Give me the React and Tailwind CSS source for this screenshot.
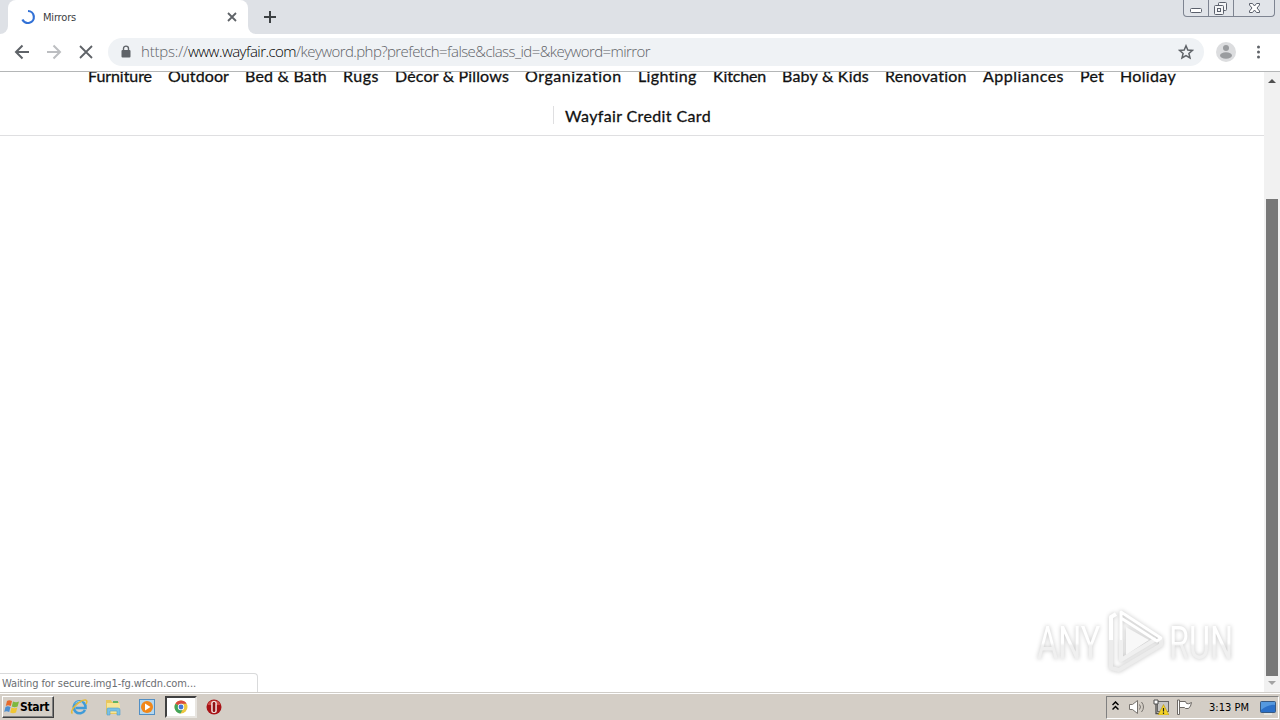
import React, { useLayoutEffect, useRef, useState } from 'react';

const categories = [
  { label: 'Furniture', width: 64 },
  { label: 'Outdoor', width: 61 },
  { label: 'Bed & Bath', width: 82 },
  { label: 'Rugs', width: 36 },
  { label: 'Décor & Pillows', width: 114 },
  { label: 'Organization', width: 97 },
  { label: 'Lighting', width: 59 },
  { label: 'Kitchen', width: 53 },
  { label: 'Baby & Kids', width: 87 },
  { label: 'Renovation', width: 82 },
  { label: 'Appliances', width: 81 },
  { label: 'Pet', width: 24 },
  { label: 'Holiday', width: 56 },
];

// Spaces the letters so that the label takes up exactly the given width
const FitText = ({ width, className = '', children }) => {
  const ref = useRef(null);
  const [spacing, setSpacing] = useState(0);

  useLayoutEffect(() => {
    const el = ref.current;
    const natural = el.getBoundingClientRect().width;
    setSpacing((width - natural) / el.textContent.length);
  }, [width]);

  return (
    <span ref={ref} className={`inline-block whitespace-nowrap ${className}`} style={{ letterSpacing: `${spacing}px` }}>
      {children}
    </span>
  );
};

const TabStrip = () => (
  <div className="flex h-[34px] bg-[#dee1e6]">
    <div className="w-2 bg-white"><div className="h-full rounded-br-lg bg-[#dee1e6]" /></div>
    <div className="flex h-full w-60 items-center rounded-t-lg bg-white pr-[10px] pl-3">
      <svg className="h-4 w-4" viewBox="0 0 16 16" fill="none" stroke="#3271d6" strokeWidth="2.200">
        <path d="M8 2a6 6 0 1 1-5.600 8.500" />
      </svg>
      <FitText width={33} className="mt-0.5 ml-[7px] text-[11px] text-[#3c4043]">Mirrors</FitText>
      <svg className="ml-auto h-3 w-3" viewBox="0 0 12 12" stroke="#5f6368" strokeWidth="1.8">
        <path d="M2 2l8 8M10 2l-8 8" />
      </svg>
    </div>
    <div className="w-2 bg-white"><div className="h-full rounded-bl-lg bg-[#dee1e6]" /></div>
    <svg className="mt-[10px] ml-[7px] h-[14px] w-[14px]" viewBox="0 0 14 14" stroke="#3c4043" strokeWidth="2">
      <path d="M7 1v12M1 7h12" />
    </svg>
    <div className="mr-[5px] ml-auto flex h-[17px] w-[92px] rounded-b border border-t-0 border-[#7e8491] bg-[#e1e4e9]">
      <div className="w-[25px] border-r border-[#7e8491] pl-[6px]">
        <svg className="h-4 w-4" viewBox="0 0 16 16" fill="#fff" stroke="#5b606c">
          <rect x=".5" y="8.5" width="11" height="4" rx="1" />
        </svg>
      </div>
      <div className="w-[25px] border-r border-[#7e8491] pl-[5px]">
        <svg className="h-4 w-4" viewBox="0 0 16 16" fill="#f4f5f7" stroke="#5b606c">
          <rect x="4.5" y="2.5" width="8" height="8" rx="1" />
          <rect x=".5" y="5.5" width="9" height="9" rx="1" />
          <rect x="3.5" y="8.5" width="3" height="3" />
        </svg>
      </div>
      <svg className="ml-[14px] h-4 w-4" viewBox="0 0 16 16" fill="#fff" stroke="#5b606c">
        <path d="M1.500 3.500h3l2 2.500 2-2.500h3V5L9 8l2.500 3v1.500h-3l-2-2.500-2 2.500h-3V11L4 8 1.500 5z" />
      </svg>
    </div>
  </div>
);

const Toolbar = () => (
  <div className="flex h-[38px] items-center border-b border-[#b4b6b7] bg-white pb-px">
    <svg className="ml-[14px] h-4 w-4" viewBox="0 0 16 16" fill="none" stroke="#5f6368" strokeWidth="2">
      <path d="M15 8H2.500M8.500 1.500L2 8l6.500 6.500" />
    </svg>
    <svg className="ml-4 h-4 w-4" viewBox="0 0 16 16" fill="none" stroke="#bcbec1" strokeWidth="2">
      <path d="M1 8h12.500M7.500 1.500L14 8l-6.500 6.500" />
    </svg>
    <svg className="ml-4 h-4 w-4" viewBox="0 0 16 16" stroke="#5f6368" strokeWidth="1.8">
      <path d="M2 2l12 12M14 2L2 14" />
    </svg>
    <div className="ml-[14px] flex h-7 w-[1096px] items-center rounded-full bg-[#eff2f5] pr-[10px] pl-[13px]">
      <svg className="h-[14px] w-[10px]" viewBox="0 0 10 14">
        <path d="M2.500 5V3.600a2.500 2.500 0 0 1 5 0V5" fill="none" stroke="#5f6368" strokeWidth="1.4" />
        <rect x=".5" y="5" width="9" height="7.500" rx="1" fill="#5f6368" />
      </svg>
      <div className="mb-0.5 ml-[10px] flex font-['Open_Sans','Noto_Sans',sans-serif] text-[15px] leading-5 font-light">
        <FitText width={47} className="text-[#5f6368]">https://</FitText>
        <FitText width={108} className="text-black">www.wayfair.com</FitText>
        <FitText width={354} className="text-[#5f6368]">/keyword.php?prefetch=false&amp;class_id=&amp;keyword=mirror</FitText>
      </div>
      <svg className="ml-auto h-4 w-4" viewBox="0 0 16 16" fill="none" stroke="#5f6368" strokeWidth="1.5">
        <path d="M8 1.800l1.800 4.200 4.600.4-3.500 3 1.100 4.500L8 11.500l-4 2.400 1.100-4.500-3.500-3 4.600-.4z" />
      </svg>
    </div>
    <svg className="ml-3 h-5 w-5" viewBox="0 0 20 20" fill="#9a9c9f">
      <circle cx="10" cy="10" r="10" fill="#dcdddf" />
      <circle cx="10" cy="6" r="3" />
      <ellipse cx="10" cy="13.500" rx="6" ry="3.200" />
    </svg>
    <svg className="ml-5 h-4 w-1" viewBox="0 0 4 16" fill="#5f6368">
      <circle cx="2.500" cy="3" r="1.500" />
      <circle cx="2.500" cy="8" r="1.500" />
      <circle cx="2.500" cy="13" r="1.500" />
    </svg>
  </div>
);

const Watermark = () => (
  <div className="absolute right-[42px] bottom-4 flex h-[70px] w-[204px] items-center justify-between px-[3px] font-['Roboto',sans-serif] text-[47px] leading-[56px] text-transparent drop-shadow-[0_0_2px_#c4c4c4]">
    <div className="mt-1 w-[64px]">
      <span className="inline-block origin-left scale-x-[0.69] bg-linear-to-b from-white from-50% to-[#f0f0f0] to-55% bg-clip-text">ANY</span>
    </div>
    <svg className="h-[64px] w-[58px]" viewBox="0 0 58 64" fill="none" stroke="#fff" strokeWidth="4" strokeLinejoin="round">
      <path d="M5 31v28l8 2 42-25v-6" stroke="#ececec" />
      <path d="M15 31v20L50 30" stroke="#f0f0f0" />
      <path d="M5 31V8l5-3" />
      <path d="M15 31V3l40 26-4 3-36-23" strokeWidth="3" />
      <path d="M20 18v28l23-15z" fill="#f8f8f8" stroke="none" />
    </svg>
    <div className="mt-1 w-[66px]">
      <span className="inline-block origin-left scale-x-[0.69] bg-linear-to-b from-white from-50% to-[#f0f0f0] to-55% bg-clip-text">RUN</span>
    </div>
  </div>
);

const Page = () => (
  <div className="relative flex h-[620px] overflow-hidden bg-white">
    <div className="h-full flex-1 overflow-hidden">
      <nav className="-mt-4 h-20 border-b border-[#dfdfe1] font-['Lato',sans-serif] text-base leading-6 text-[#111] [-webkit-text-stroke:0.3px_#111]">
        <div className="flex h-10 items-center gap-4 pl-[88px]">
          {categories.map(({ label, width }) => (
            <div key={label} className="flex-none" style={{ width }}>
              <FitText width={width}>{label}</FitText>
            </div>
          ))}
        </div>
        <div className="flex h-10 items-center pb-0.5 pl-[553px]">
          <div className="h-[18px] border-l border-[#dfdfe1]" />
          <FitText width={146} className="mt-0.5 ml-[11px]">Wayfair Credit Card</FitText>
        </div>
      </nav>
    </div>
    <div className="flex h-full w-4 flex-col items-center bg-[#f1f1f1]">
      <svg className="h-4 w-4" viewBox="0 0 16 16" fill="#505050"><path d="M4 11l4-4 4 4z" /></svg>
      <div className="mt-[111px] h-[477px] w-3 bg-[#787878]" />
      <svg className="h-4 w-4" viewBox="0 0 16 16" fill="#a3a3a3"><path d="M4 5l4 4 4-4z" /></svg>
    </div>
    <Watermark />
    <div className="absolute bottom-0 left-0 h-[19px] w-[258px] rounded-tr border border-b-0 border-l-0 border-[#d9dadb] bg-white pl-[2px] text-[11px] leading-[20px] text-[#6b6e72]">
      <FitText width={194}>Waiting for secure.img1-fg.wfcdn.com...</FitText>
    </div>
  </div>
);

const ExplorerIcon = () => (
  <svg className="h-[18px] w-[18px]" viewBox="0 0 18 18" fill="none">
    <path d="M15 12a6 6 0 1 1 .4-4.500L15.500 10H5.500" stroke="#3f9bd8" strokeWidth="2.600" />
    <path d="M5 5.500c2-2.500 6-2.700 7.500 0" stroke="#9bd5f3" />
    <path d="M2.500 15.500c-4-2 7-14 13-13.500 2 .3 1.500 2.500.5 4" stroke="#e5ba38" strokeWidth="1.500" />
  </svg>
);

const FolderIcon = () => (
  <svg className="h-[18px] w-[18px]" viewBox="0 0 18 18">
    <path d="M2 2h5l1 2h7v12H2z" fill="#e9c75e" />
    <path d="M3 5h12l1 2v8H3z" fill="#f7e596" />
    <path d="M9 3h5v2H9z" fill="#63b463" />
    <path d="M3 17v-6q0-1 1-1h10q2 0 2 2v5h-3v-4H6v4z" fill="#79c1e5" stroke="#529fc9" strokeWidth=".6" />
  </svg>
);

const PlayerIcon = () => (
  <svg className="h-4 w-4" viewBox="0 0 16 16">
    <rect x=".5" y=".5" width="15" height="15" fill="#b4d7ef" stroke="#528fc4" />
    <circle cx="8" cy="8" r="6" fill="#f18719" />
    <path d="M6 4.500l5.500 3.500L6 11.500z" fill="#fff" />
  </svg>
);

const ChromeIcon = () => (
  <svg className="h-[14px] w-[14px]" viewBox="0 0 14 14">
    <circle cx="7" cy="7" r="6.500" fill="#edc740" />
    <path d="M7 7L1.400 3.700A6.500 6.500 0 0 1 12.600 3.700H7z" fill="#d94b3f" />
    <path d="M1.400 3.700A6.500 6.500 0 0 0 6.500 13.500L9 9 7 7z" fill="#42a45b" />
    <circle cx="7" cy="7" r="3.200" fill="#fff" />
    <circle cx="7" cy="7" r="2.400" fill="#4477d5" />
  </svg>
);

const OperaIcon = () => (
  <svg className="h-4 w-4" viewBox="0 0 16 16">
    <circle cx="8" cy="8" r="7.500" fill="#a81317" />
    <path d="M1.500 6a7 7 0 0 1 13 0z" fill="#cf4b45" />
    <rect x="5.200" y="2" width="5.600" height="12" rx="2.500" fill="#f2e6e4" />
    <rect x="6.700" y="3" width="2.600" height="10" rx="1.200" fill="#8f1114" />
  </svg>
);

const WindowsIcon = () => (
  <svg className="h-4 w-4" viewBox="0 0 16 16">
    <path d="M3 2q2-1.500 5 0L6.800 7q-3-1.500-5 0z" fill="#e66a2b" />
    <path d="M9 2.500q3 1.500 6 0L13.600 7.500q-3 1.500-5.800 0z" fill="#7db83f" />
    <path d="M1.500 8q2-1.500 5 0L5.200 13q-3-1.500-5 0z" fill="#4c8ed0" />
    <path d="M7.500 8.500q3 1.500 5.800 0L12 13.500q-3 1.500-5.800 0z" fill="#f0c634" />
  </svg>
);

const Taskbar = () => (
  <footer className="flex h-7 items-start border-t border-[#d0cdc8] bg-[#d4cec6] shadow-[inset_0_1px_0_#ffffff]">
    <button className="mt-[3px] ml-[2px] flex h-[22px] w-[52px] items-center border border-t-white border-r-[#404040] border-b-[#404040] border-l-white pl-px text-[12px] font-bold text-black shadow-[inset_-1px_-1px_0_#808080]">
      <WindowsIcon />
      <FitText width={29}>Start</FitText>
    </button>
    <div className="mt-[5px] ml-4"><ExplorerIcon /></div>
    <div className="mt-[5px] ml-4"><FolderIcon /></div>
    <div className="mt-[6px] ml-[17px]"><PlayerIcon /></div>
    <div className="mt-[3px] ml-[10px] flex h-[22px] w-8 items-center justify-center border-2 border-t-[#404040] border-r-[#e8e5e0] border-b-[#e8e5e0] border-l-[#404040] bg-white">
      <ChromeIcon />
    </div>
    <div className="mt-[6px] ml-[9px]"><OperaIcon /></div>
    <div className="mt-[3px] mr-px ml-auto flex h-[23px] w-[173px] items-center border border-t-[#808080] border-r-white border-b-white border-l-[#808080] pl-[5px]">
      <svg className="mb-[3px] h-[10px] w-[7px]" viewBox="0 0 7 10" fill="none" stroke="#000" strokeWidth="1.500">
        <path d="M.5 4l3-3 3 3M.5 8.500l3-3 3 3" />
      </svg>
      <svg className="mb-0.5 ml-[10px] h-4 w-[17px]" viewBox="0 0 17 16" fill="#fff" stroke="#77736e">
        <path d="M.5 5.500h3l5-4v13l-5-4h-3z" />
        <path d="M10.500 5.500q2 2.500 0 5M12.500 3q4 5 0 10" fill="none" />
      </svg>
      <svg className="mb-0.5 ml-[7px] h-4 w-4" viewBox="0 0 16 16">
        <rect x="4.500" y="2.500" width="11" height="10" fill="#c6c6c4" stroke="#666" />
        <path d="M1 1h4v4H1z" fill="#fff" stroke="#4f4f4f" />
        <path d="M3 5v9.500h7" fill="none" stroke="#4f4f4f" strokeWidth="1.300" />
        <path d="M10.500 5.500L16 16H5z" fill="#f4d326" stroke="#a98b10" strokeWidth=".5" />
        <path d="M10.500 9v3.500M10.500 13.500V15" stroke="#222" strokeWidth="1.200" />
      </svg>
      <svg className="mb-0.5 ml-2 h-4 w-4" viewBox="0 0 16 16" fill="#fff" stroke="#6d6965">
        <path d="M2.500 2.500h6l1 2q2 1 5-1-.5 4-3 6h-3l-1-1h-5z" />
        <path d="M.5 1v14.500h2V1z" />
      </svg>
      <FitText width={40} className="mt-0.5 ml-4 text-[11px] text-black">3:13 PM</FitText>
      <svg className="ml-[11px] h-4 w-4" viewBox="0 0 16 16">
        <rect x=".5" y="1.500" width="15" height="11" rx="1" fill="#2b70c8" stroke="#385a82" />
        <path d="M1 2h14v3Q8 4 1 10z" fill="#5599df" />
        <path d="M4 13h8v2H4z" fill="#e4e4df" />
      </svg>
    </div>
  </footer>
);

const App = () => (
  <div className="flex h-[720px] w-[1280px] flex-col overflow-hidden bg-white font-['DejaVu_Sans_Condensed','DejaVu_Sans',sans-serif]">
    <TabStrip />
    <Toolbar />
    <Page />
    <Taskbar />
  </div>
);

export default App;
